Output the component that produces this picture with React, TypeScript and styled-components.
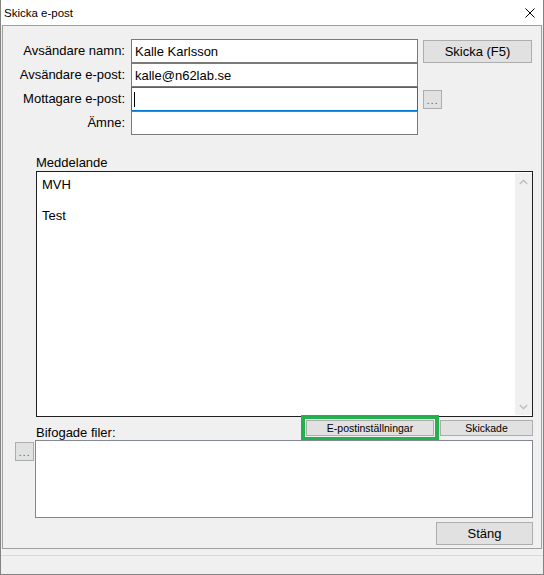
import styled, { createGlobalStyle } from "styled-components";

const GlobalStyle = createGlobalStyle`
  html, body {
    margin: 0;
    padding: 0;
    background: #ffffff;
  }
  body {
    font-family: "Liberation Sans", Arial, sans-serif;
    color: #000;
  }
  * {
    box-sizing: border-box;
  }
`;

const Window = styled.div`
  width: 544px;
  height: 575px;
  display: flex;
  flex-direction: column;
  background: #f0f0f0;
  border: 1px solid #838383;
  border-top: none;
`;

const TitleBar = styled.div`
  height: 25px;
  flex: none;
  display: flex;
  align-items: center;
  justify-content: space-between;
  padding: 0 8px 0 3px;
  background: #ffffff;
  font-size: 11.5px;
`;

const Panel = styled.div`
  height: 524px;
  flex: none;
  margin: 0 1px;
  border: 1px solid #a0a0a0;
  display: flex;
  flex-direction: column;
  padding: 0 8px 0 0;
`;

const Form = styled.div`
  margin-top: 13px;
  display: grid;
  grid-template-columns: 122px 287px 1fr;
  grid-auto-rows: 24px;
  column-gap: 6px;
`;

const FieldLabel = styled.label`
  grid-column: 1;
  font-size: 13px;
  line-height: 24px;
  text-align: right;
  white-space: nowrap;
`;

const Field = styled.div<{ $focused?: boolean }>`
  grid-column: 2;
  height: 24px;
  display: flex;
  align-items: center;
  padding: 0 3px;
  background: #ffffff;
  border: 1px solid ${(p) => (p.$focused ? "#0078d7" : "#7a7a7a")};
  font-size: 13px;
  white-space: nowrap;
`;

const Caret = styled.span`
  display: inline-block;
  width: 1px;
  height: 15px;
  margin-left: -1px;
  background: #000;
`;

const Button = styled.button<{ $w: number; $h: number; $small?: boolean }>`
  width: ${(p) => p.$w}px;
  height: ${(p) => p.$h}px;
  flex: none;
  padding: 0;
  background: #e1e1e1;
  border: 1px solid #adadad;
  font-family: "Liberation Sans", Arial, sans-serif;
  font-size: ${(p) => (p.$small ? "10.5px" : "13px")};
  color: #000;
  cursor: default;
`;

const SideButton = styled(Button)<{ $top: number }>`
  grid-column: 3;
  align-self: start;
  margin-top: ${(p) => p.$top}px;
  margin-left: -1px;
`;

const DotsButton = styled.button<{ $top?: number }>`
  width: 19px;
  height: 19px;
  flex: none;
  padding: 0 0 2px;
  margin-top: ${(p) => p.$top ?? 0}px;
  display: flex;
  align-items: flex-end;
  justify-content: center;
  background: #e1e1e1;
  border: 1px solid #adadad;
  font-family: "Liberation Sans", Arial, sans-serif;
  font-size: 11px;
  line-height: 11px;
  letter-spacing: 1px;
  color: #1e6fd0;
`;

const GridDots = styled(DotsButton)`
  grid-column: 3;
  align-self: start;
  margin-left: -1px;
`;

const Section = styled.div`
  margin-left: 33px;
  display: flex;
  flex-direction: column;
`;

const SectionLabel = styled.div`
  margin-top: 20px;
  font-size: 13px;
  line-height: 16px;
`;

const MessageBox = styled.div`
  height: 246px;
  display: flex;
  padding: 1px 0;
  background: #ffffff;
  border: 1px solid #1f1f1f;
`;

const MessageText = styled.div`
  flex: 1;
  padding: 3.5px 5px;
  font-size: 13px;
  line-height: 15.5px;
  white-space: pre-line;
`;

const Scrollbar = styled.div`
  width: 17px;
  flex: none;
  display: flex;
  flex-direction: column;
  justify-content: space-between;
  background: #f0f0f0;
`;

const ScrollArrow = styled.div`
  height: 17px;
  display: flex;
  align-items: center;
  justify-content: center;
`;

const ButtonRow = styled.div`
  height: 20px;
  margin-top: 3px;
  display: flex;
  align-items: flex-start;
  gap: 6px;
`;

const RowLabel = styled.div`
  align-self: flex-end;
  margin-right: auto;
  font-size: 13px;
  line-height: 15px;
`;

const Highlighted = styled(Button)`
  outline: 4px solid #22b14c;
  outline-offset: 1px;
`;

const AttachRow = styled.div`
  display: flex;
  margin-left: 12px;
`;

const AttachBox = styled.div`
  flex: 1;
  height: 78px;
  margin-left: 1px;
  background: #ffffff;
  border: 1px solid #828790;
`;

const Footer = styled.div`
  margin-top: 4px;
  display: flex;
  justify-content: flex-end;
`;

const StatusBar = styled.div`
  height: 25px;
  flex: none;
  padding-top: 6px;
`;

const StatusLine = styled.div`
  height: 100%;
  border-top: 1px solid #d9d9d9;
`;

const Chevron = ({ down }: { down?: boolean }) => (
  <svg width="9" height="6" viewBox="0 0 9 6">
    <polyline
      points={down ? "0.8,1 4.5,4.6 8.2,1" : "0.8,5 4.5,1.4 8.2,5"}
      fill="none"
      stroke="#c2c2c2"
      strokeWidth="1.6"
    />
  </svg>
);

const CloseIcon = () => (
  <svg width="10" height="10" viewBox="0 0 10 10">
    <path d="M0.5 0.5 L9.5 9.5 M9.5 0.5 L0.5 9.5" stroke="#000" strokeWidth="1" />
  </svg>
);

export default function App() {
  return (
    <>
      <GlobalStyle />
      <Window>
        <TitleBar>
          <span>Skicka e-post</span>
          <CloseIcon />
        </TitleBar>
        <Panel>
          <Form>
            <FieldLabel>Avsändare namn:</FieldLabel>
            <Field>Kalle Karlsson</Field>
            <SideButton $w={109} $h={23} $top={1}>
              Skicka (F5)
            </SideButton>
            <FieldLabel>Avsändare e-post:</FieldLabel>
            <Field>kalle@n62lab.se</Field>
            <FieldLabel>Mottagare e-post:</FieldLabel>
            <Field $focused>
              <Caret />
            </Field>
            <GridDots $top={3}>...</GridDots>
            <FieldLabel>Ämne:</FieldLabel>
            <Field />
          </Form>

          <Section>
            <SectionLabel>Meddelande</SectionLabel>
            <MessageBox>
              <MessageText>{"MVH\n\nTest"}</MessageText>
              <Scrollbar>
                <ScrollArrow>
                  <Chevron />
                </ScrollArrow>
                <ScrollArrow>
                  <Chevron down />
                </ScrollArrow>
              </Scrollbar>
            </MessageBox>
            <ButtonRow>
              <RowLabel>Bifogade filer:</RowLabel>
              <Highlighted $w={128} $h={16} $small>
                E-postinställningar
              </Highlighted>
              <Button $w={93} $h={16} $small>
                Skickade
              </Button>
            </ButtonRow>
          </Section>

          <AttachRow>
            <DotsButton $top={2}>...</DotsButton>
            <AttachBox />
          </AttachRow>

          <Footer>
            <Button $w={97} $h={23}>
              Stäng
            </Button>
          </Footer>
        </Panel>
        <StatusBar>
          <StatusLine />
        </StatusBar>
      </Window>
    </>
  );
}
